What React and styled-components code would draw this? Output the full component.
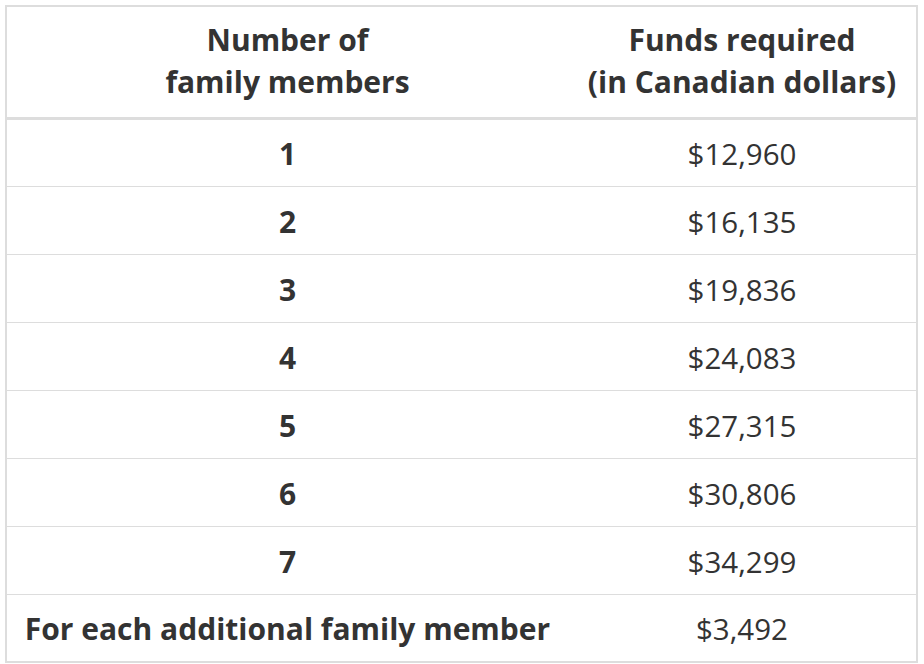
import React from 'react';
import styled, { createGlobalStyle } from 'styled-components';

const GlobalStyle = createGlobalStyle`
  body {
    margin: 0;
    background: #ffffff;
    font-family: 'Open Sans', 'Noto Sans', sans-serif;
    color: #333333;
  }
`;

const Page = styled.div`
  padding: 5px;
`;

const Table = styled.table`
  width: 913px;
  table-layout: fixed;
  border-collapse: collapse;
  border: 2px solid #dddddd;
`;

const HeadCell = styled.th`
  height: 112px;
  padding: 0 10px 2px;
  box-sizing: border-box;
  font-size: 30px;
  line-height: 42px;
  font-weight: 700;
  text-align: center;
  vertical-align: middle;
  white-space: nowrap;
  border-bottom: 3px solid #dddddd;
`;

const Row = styled.tr`
  border-top: 1px solid #dddddd;
`;

const Cell = styled.td`
  height: 68px;
  padding: 2px 10px 0;
  box-sizing: border-box;
  font-size: ${props => (props.$bold ? 30 : 29.5)}px;
  font-weight: ${props => (props.$bold ? 700 : 400)};
  text-align: center;
  vertical-align: middle;
  white-space: nowrap;
`;

const rows = [
  ['1', '$12,960'],
  ['2', '$16,135'],
  ['3', '$19,836'],
  ['4', '$24,083'],
  ['5', '$27,315'],
  ['6', '$30,806'],
  ['7', '$34,299'],
  ['For each additional family member', '$3,492'],
];

const App = () => (
  <Page>
    <GlobalStyle />
    <Table>
      <colgroup>
        <col style={{ width: '562px' }} />
        <col />
      </colgroup>
      <thead>
        <tr>
          <HeadCell>
            Number of
            <br />
            family members
          </HeadCell>
          <HeadCell>
            Funds required
            <br />
            (in Canadian dollars)
          </HeadCell>
        </tr>
      </thead>
      <tbody>
        {rows.map(([count, funds]) => (
          <Row key={count}>
            <Cell $bold>{count}</Cell>
            <Cell>{funds}</Cell>
          </Row>
        ))}
      </tbody>
    </Table>
  </Page>
);

export default App;
